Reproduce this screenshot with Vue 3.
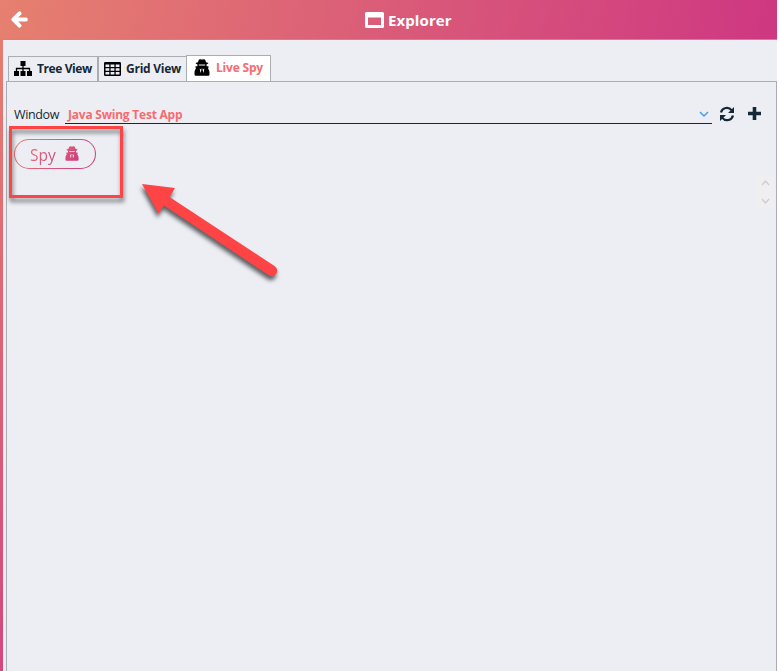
<script setup>
const spyPath =
  'M4.600 1.300C5.200 0 6.300.2 7 .6h2c.7-.4 1.800-.6 2.400.7l.6 1.900c1.500.300 2.300.6 2.300 1.100 0 .5-.7.800-1.700 1v2h1.100c.7 0 .9.4.8.9l-.4 1.500c.9 1 1.400 2.400 1.400 4v1.700c0 .8-.6 1.400-1.400 1.400H1.900C1.100 16.800.5 16.200.5 15.400v-1.700c0-1.600.5-3 1.400-4l-.4-1.500c-.1-.5.100-.9.8-.9h1.100v-2c-1-.2-1.700-.5-1.700-1 0-.5.8-.8 2.300-1.100zM4.800 5.600v.8h6.400v-.8zM5.700 9.500l.8 4.400.8-2.300-.5-1.300zM10.300 9.500l-.8 4.400-.8-2.300.5-1.300zM7.300 9.700h1.400v.8H7.300z'
</script>

<template>
  <div class="window">
    <header class="titlebar">
      <svg class="back" viewBox="0 0 16 16"><path d="M8 2.300 2.300 8 8 13.700M3 8h11" fill="none" stroke="#fff" stroke-width="3.700" stroke-linejoin="round" stroke-linecap="round" /></svg>
      <div class="title">
        <svg width="19" height="16" viewBox="0 0 19 16"><path fill="#fff" fill-rule="evenodd" d="M1.500 0h16Q19 0 19 1.500v13q0 1.500-1.500 1.500h-16Q0 16 0 14.500v-13Q0 0 1.500 0zM3 5.500V13h13V5.500z" /></svg>
        <span>Explorer</span>
      </div>
    </header>
    <main class="content">
      <nav class="tabs">
        <div class="tab tree">
          <svg width="18" height="15" viewBox="0 0 18 15"><path d="M6.500 0h5v5h-5zM0 10h5v5H0zM6.500 10h5v5h-5zM13 10h5v5h-5z" /><path d="M9 4v7M2.500 11V7.500h13V11" fill="none" stroke="#000" stroke-width="1.300" /></svg>
          <span>Tree View</span>
        </div>
        <div class="tab grid">
          <svg width="17" height="14" viewBox="0 0 17 14"><path fill-rule="evenodd" d="M1.300 0h14.400Q17 0 17 1.300v11.400q0 1.300-1.300 1.300H1.300Q0 14 0 12.700V1.300Q0 0 1.300 0zM1.500 2.400V5h3.800V2.400zM6.600 2.400V5h3.800V2.400zM11.700 2.400V5h3.800V2.400zM1.500 6.200v2.600h3.800V6.200zM6.600 6.200v2.600h3.800V6.200zM11.700 6.200v2.600h3.800V6.200zM1.500 10v2.600h3.800V10zM6.600 10v2.600h3.800V10zM11.700 10v2.600h3.800V10z" /></svg>
          <span>Grid View</span>
        </div>
        <div class="tab live">
          <svg width="16" height="17" viewBox="0 0 16 17"><path fill-rule="evenodd" :d="spyPath" /></svg>
          <span>Live Spy</span>
        </div>
      </nav>
      <section class="panel">
        <div class="row">
          <span class="label">Window</span>
          <div class="select">
            <span>Java Swing Test App</span>
            <svg width="10" height="7" viewBox="0 0 10 7"><path d="m1 1 4 4 4-4" fill="none" stroke="#3a9df0" stroke-width="1.400" /></svg>
          </div>
          <svg class="refresh" width="16" height="16" viewBox="0 0 16 16"><path d="M2 6.500a6 6 0 0 1 10.600-2.300M14 9.500A6 6 0 0 1 3.400 11.800" fill="none" stroke="#142835" stroke-width="2.200" /><path d="M15 1v6H9zM1 15V9h6z" fill="#142835" /></svg>
          <svg class="plus" width="13" height="13" viewBox="0 0 13 13"><path d="M6.500 0v13M0 6.500h13" stroke="#142835" stroke-width="3.600" /></svg>
        </div>
        <button class="spy">
          <span>Spy</span>
          <svg width="14" height="15" viewBox="0 0 16 17">
            <defs><linearGradient id="spyFill" x1="0" y1="0" x2="1" y2="1"><stop offset="0" stop-color="#dc6078" /><stop offset="1" stop-color="#ce3a82" /></linearGradient></defs>
            <path fill="url(#spyFill)" fill-rule="evenodd" :d="spyPath" />
          </svg>
        </button>
        <div class="spinner">
          <svg width="9" height="24" viewBox="0 0 9 24"><path d="m1 5 3.500-4L8 5M1 19l3.500 4L8 19" fill="none" stroke="#cccccf" stroke-width="1.200" /></svg>
        </div>
      </section>
    </main>
    <div class="highlight"></div>
    <svg class="arrow" width="150" height="115" viewBox="0 0 150 115"><g fill="#fe4445"><path d="M12 14 45 18 39.500 27 144.500 96 A5.300 5.300 0 0 1 139 105.500 L34 35.500 28.500 43.500Z" /></g></svg>
  </div>
</template>

<style>
body { background: #fff; overflow: hidden; }
</style>

<style scoped>
* { box-sizing: border-box; }
svg { display: block; flex: none; }
.window { position: relative; width: 777px; height: 671px; padding-left: 3px; background: linear-gradient(180deg, #e6806f, #d4477f); font-family: "Open Sans", "Noto Sans", sans-serif; color: #142835; }
.titlebar { display: flex; align-items: center; height: 40px; margin-left: -3px; border-bottom: 1px solid #e87872; background: linear-gradient(100deg, #e6806f, #ce3782); }
.back { width: 17px; height: 17px; margin-left: 11px; }
.title { display: flex; align-items: center; gap: 4px; margin-left: 337px; color: #fff; font-size: 15px; font-weight: 700; letter-spacing: 0.1px; }
.content { display: flex; flex-direction: column; height: 631px; padding: 15px 0 0 3px; background: #edeef4; }
.tabs { display: flex; align-items: flex-end; height: 26px; padding-left: 2px; }
.tab { display: flex; align-items: center; height: 25px; border: 1px solid #abadb3; border-bottom: 0; font-size: 12px; font-weight: 700; letter-spacing: -0.4px; white-space: nowrap; }
.tab svg { fill: #000; }
.tree { width: 90px; gap: 5px; padding-left: 5px; padding-bottom: 1px; }
.grid { width: 90px; gap: 5px; padding-left: 5px; padding-bottom: 1px; letter-spacing: -0.25px; }
.live { width: 85px; height: 26px; gap: 6px; margin-left: -2px; padding-left: 7px; padding-bottom: 2px; background: #fff; color: #f66b70; letter-spacing: -0.2px; }
.panel { flex: 1; border: 1px solid #abadb3; border-bottom: 0; padding: 20px 0 0 7px; }
.row { display: flex; align-items: center; height: 22px; font-size: 12px; }
.label { width: 51px; padding-top: 2px; font-size: 12.500px; letter-spacing: -0.35px; }
.select { display: flex; align-items: center; justify-content: space-between; width: 647px; height: 22px; padding: 0 3px; border-bottom: 1px solid #142835; color: #f66b70; font-weight: 700; letter-spacing: -0.22px; }
.select span { padding-top: 4px; }
.select svg { margin-top: 4px; }
.refresh { margin-top: 2px; margin-left: 7px; }
.plus { margin-top: 1px; margin-left: 13px; }
.spy { display: flex; align-items: center; gap: 9px; width: 82px; height: 30px; margin-top: 15px; padding: 0 0 0 15px; border: 1px solid transparent; border-radius: 15px; background: linear-gradient(#edeef4, #edeef4) padding-box, linear-gradient(120deg, #e88070, #ce3782) border-box; font: 15.500px "Open Sans", sans-serif; }
.spy span { padding-top: 1px; background: linear-gradient(110deg, #df7078, #cf467f); background-clip: text; color: transparent; }
.spy svg { margin-bottom: 2px; }
.spinner { display: flex; align-items: center; justify-content: center; width: 18px; height: 34px; margin: 6px 2px 0 auto; background: #efeff1; }
.highlight { position: absolute; left: 9px; top: 126px; width: 114px; height: 72px; border: 3px solid #fe4445; filter: drop-shadow(1px 4px 2px rgba(0, 0, 0, 0.5)); }
.arrow { position: absolute; left: 130px; top: 170px; filter: drop-shadow(-1px 4px 2px rgba(0, 0, 0, 0.6)); }
</style>
